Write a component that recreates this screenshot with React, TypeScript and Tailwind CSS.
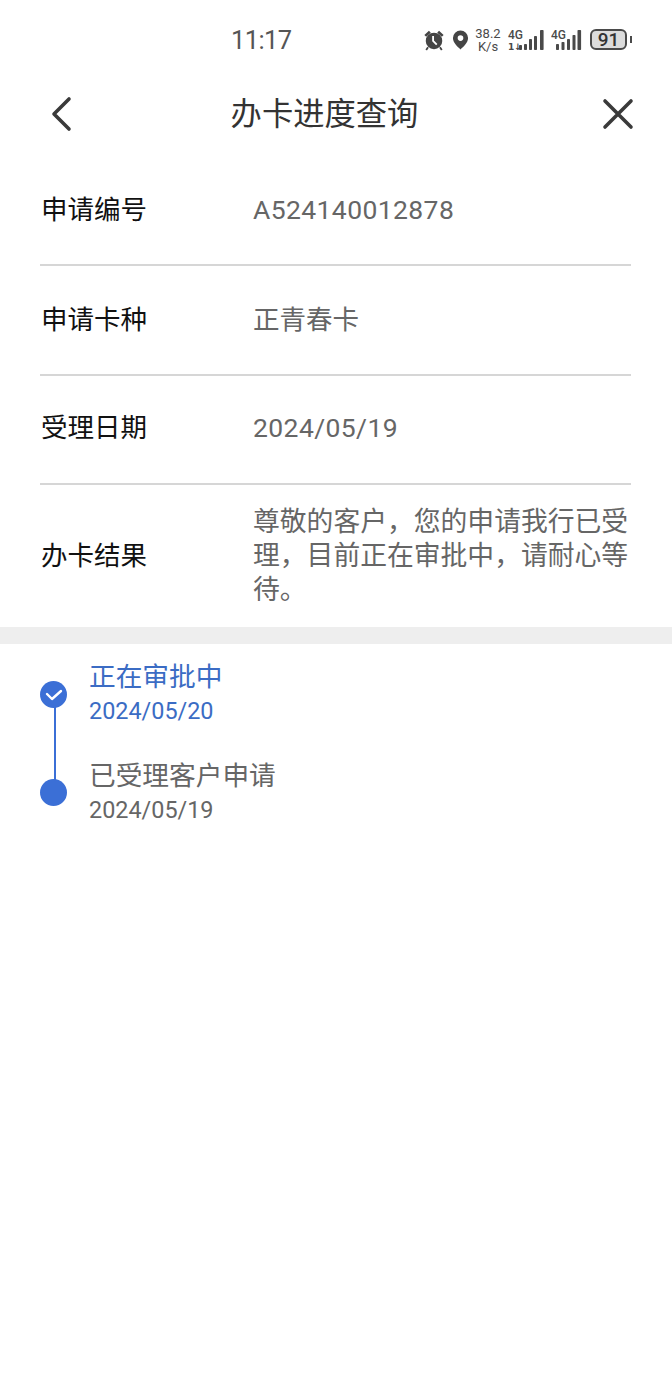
import React from "react";

const FONT = "font-['Roboto','Noto_Sans_CJK_SC',sans-serif]";

const SignalOne = () => (
  <svg width="37" height="22" viewBox="0 0 37 22" fill="#4a4a4a" className="ml-[6px]">
    <text x="1" y="10" fontSize="12" fontWeight="500" fontFamily="Roboto, sans-serif">4G</text>
    <text x="1" y="21" fontSize="9" fontWeight="700" fontFamily="'DejaVu Sans', sans-serif">1↓</text>
    <rect x="12" y="16" width="3" height="5" rx="0.8" />
    <rect x="17" y="15" width="3" height="6" rx="0.8" />
    <rect x="22" y="10" width="3" height="11" rx="0.8" />
    <rect x="27" y="7" width="3" height="14" rx="0.8" />
    <rect x="33" y="1" width="3.600" height="20" rx="0.8" />
  </svg>
);

const SignalTwo = () => (
  <svg width="31" height="22" viewBox="0 0 31 22" fill="#4a4a4a" className="ml-[7px]">
    <text x="0" y="10" fontSize="12" fontWeight="500" fontFamily="Roboto, sans-serif">4G</text>
    <rect x="5" y="15" width="3" height="6" rx="0.8" />
    <rect x="10.500" y="13" width="3" height="8" rx="0.8" />
    <rect x="16" y="10" width="3" height="11" rx="0.8" />
    <rect x="21.500" y="6" width="3" height="15" rx="0.8" />
    <rect x="26.500" y="1" width="3.600" height="20" rx="0.8" />
  </svg>
);

const StatusBar = () => (
  <div className="flex h-[78px] items-center pl-[231px] pr-[40px]">
    <span className="mt-[4px] text-[25.5px] leading-none tracking-[-0.6px] text-[#555555]">11:17</span>
    <div className="ml-auto mt-[1px] flex items-center">
      <svg width="22" height="22" viewBox="0 0 24 24" fill="#454545">
        <circle cx="12" cy="13" r="9" />
        <path d="M1.500 6.500 6.500 2l2 2-5 4.500zM22.500 6.500 17.500 2l-2 2 5 4.500z" />
        <path d="M5.500 20 3.500 23M18.500 20l2 3" stroke="#454545" strokeWidth="2" />
        <path d="M11 7.500V13l4 4" stroke="#fff" strokeWidth="2" fill="none" />
      </svg>
      <svg width="17" height="22" viewBox="0 0 18 22" fill="#454545" className="ml-[7px]">
        <path fillRule="evenodd" d="M9 1a8 8 0 0 1 8 8c0 5-5 9.500-8 12-3-2.500-8-7-8-12a8 8 0 0 1 8-8zm0 5a3 3 0 1 0 0 6 3 3 0 0 0 0-6z" />
      </svg>
      <div className="ml-[6px] flex w-[26px] flex-col items-center text-[13px] leading-[13px] text-[#4a4a4a]">
        <span>38.2</span>
        <span>K/s</span>
      </div>
      <SignalOne />
      <SignalTwo />
      <div className="ml-[8px] flex items-center">
        <div className="flex h-[21px] w-[37px] items-center justify-center rounded-[6px] border-2 border-[#4a4a4a] bg-[#dcdcdc] text-[19px] font-medium leading-none text-[#333333]">
          91
        </div>
        <div className="ml-[3px] h-[7px] w-[2px] bg-[#4a4a4a]" />
      </div>
    </div>
  </div>
);

const Row = ({ label, value, className, latin }: { label: string; value: string; className: string; latin?: boolean }) => (
  <div className={`flex items-center border-b-2 border-[#d6d6d6] ${className}`}>
    <div className="w-[213px] shrink-0 pl-[1px] text-[26.5px] leading-[34px] text-[#111111]">{label}</div>
    <div className={`text-[26.5px] leading-[34px] text-[#666666] ${latin ? "tracking-[0.4px]" : ""}`}>{value}</div>
  </div>
);

const Dot = ({ checked }: { checked?: boolean }) => (
  <div className="flex h-[27px] w-[27px] items-center justify-center rounded-full bg-[#3b6fd6]">
    {checked && (
      <svg width="18" height="14" viewBox="0 0 18 14" fill="none" stroke="#fff" strokeWidth="2.4" strokeLinecap="round" strokeLinejoin="round">
        <path d="M2 6l5 5L16 3" />
      </svg>
    )}
  </div>
);

export default function App() {
  return (
    <div className={`${FONT} min-h-[1386px] w-[672px] bg-white`}>
      <StatusBar />

      <div className="relative flex h-[72px] items-center justify-center pr-[23px] pt-[2px]">
        <button className="absolute left-[49px] top-[18px]">
          <svg width="24" height="36" viewBox="0 0 24 36" fill="none" stroke="#3a3a3a" strokeWidth="3.6" strokeLinecap="round" strokeLinejoin="round">
            <path d="M20 3 5 18l15 15" />
          </svg>
        </button>
        <h1 className="text-[31.3px] font-normal leading-none text-[#333333]">办卡进度查询</h1>
        <button className="absolute right-[38px] top-[20px]">
          <svg width="32" height="32" viewBox="0 0 32 32" fill="none" stroke="#3a3a3a" strokeWidth="3.6" strokeLinecap="round">
            <path d="M3 3l26 26M29 3 3 29" />
          </svg>
        </button>
      </div>

      <div className="pl-[40px] pr-[41px]">
        <Row className="h-[116px] pt-[6px]" label="申请编号" value="A524140012878" latin />
        <Row className="h-[110px]" label="申请卡种" value="正青春卡" />
        <Row className="h-[109px] pb-[4px]" label="受理日期" value="2024/05/19" latin />
        <div className="flex h-[142px] items-center">
          <div className="w-[213px] shrink-0 pl-[1px] text-[26.5px] leading-[34px] text-[#111111]">办卡结果</div>
          <div className="text-[26.8px] leading-[34px] text-[#666666]">
            尊敬的客户，您的申请我行已受理，目前正在审批中，请耐心等待。
          </div>
        </div>
      </div>

      <div className="h-[17px] bg-[#eeeeee]" />

      <div className="flex flex-col px-[40px] pt-[16px]">
        <div className="relative flex h-[99px] gap-[22px]">
          <div className="absolute left-[14px] top-[40px] h-[100px] w-[2px] bg-[#3b6fd6]" />
          <div className="relative pt-[21px]">
            <Dot checked />
          </div>
          <div>
            <div className="text-[26.7px] leading-[34px] text-[#3b6cc4]">正在审批中</div>
            <div className="text-[23.4px] leading-[34px] text-[#3b6cc4]">2024/05/20</div>
          </div>
        </div>
        <div className="relative flex gap-[22px]">
          <div className="relative pt-[20px]">
            <Dot />
          </div>
          <div>
            <div className="text-[26.7px] leading-[34px] text-[#666666]">已受理客户申请</div>
            <div className="text-[23.4px] leading-[34px] text-[#666666]">2024/05/19</div>
          </div>
        </div>
      </div>
    </div>
  );
}
